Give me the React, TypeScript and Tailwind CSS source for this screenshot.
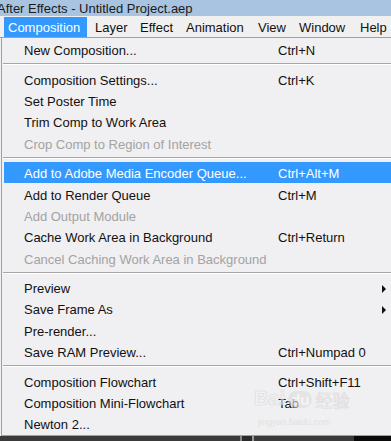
import React from "react";

type Item =
  | { type: "item"; label: string; shortcut?: string; disabled?: boolean; active?: boolean; arrow?: boolean }
  | { type: "sep" };

const items: Item[] = [
  { type: "item", label: "New Composition...", shortcut: "Ctrl+N" },
  { type: "sep" },
  { type: "item", label: "Composition Settings...", shortcut: "Ctrl+K" },
  { type: "item", label: "Set Poster Time" },
  { type: "item", label: "Trim Comp to Work Area" },
  { type: "item", label: "Crop Comp to Region of Interest", disabled: true },
  { type: "sep" },
  { type: "item", label: "Add to Adobe Media Encoder Queue...", shortcut: "Ctrl+Alt+M", active: true },
  { type: "item", label: "Add to Render Queue", shortcut: "Ctrl+M" },
  { type: "item", label: "Add Output Module", disabled: true },
  { type: "item", label: "Cache Work Area in Background", shortcut: "Ctrl+Return" },
  { type: "item", label: "Cancel Caching Work Area in Background", disabled: true },
  { type: "sep" },
  { type: "item", label: "Preview", arrow: true },
  { type: "item", label: "Save Frame As", arrow: true },
  { type: "item", label: "Pre-render..." },
  { type: "item", label: "Save RAM Preview...", shortcut: "Ctrl+Numpad 0" },
  { type: "sep" },
  { type: "item", label: "Composition Flowchart", shortcut: "Ctrl+Shift+F11" },
  { type: "item", label: "Composition Mini-Flowchart", shortcut: "Tab" },
  { type: "item", label: "Newton 2..." },
];

export default function App() {
  return (
    <div
      className="relative w-[391px] h-[441px] overflow-hidden bg-[#f0eff1] text-[13px] leading-none text-[#111]"
      style={{ fontFamily: '"Liberation Sans", Arial, sans-serif' }}
    >
      {/* Title bar */}
      <div className="h-[16px] bg-[#a8c4e1] flex items-center overflow-hidden">
        <span className="ml-[-3px] shrink-0 whitespace-nowrap text-[#1a1a1a]">After Effects - Untitled Project.aep</span>
      </div>

      {/* Menu bar */}
      <div className="h-[22px] bg-[#f0f0f0] flex items-stretch pt-[1px] pl-[4px] border-b border-[#a0a0a0] whitespace-nowrap">
        <div className="shrink-0 w-[83px] bg-[#3399ff] text-white flex items-center pl-[4px]">Composition</div>
        <div className="shrink-0 w-[8px]" />
        <div className="shrink-0 flex items-center w-[45px]">Layer</div>
        <div className="shrink-0 flex items-center w-[46px]">Effect</div>
        <div className="shrink-0 flex items-center w-[72px]">Animation</div>
        <div className="shrink-0 flex items-center w-[41px]">View</div>
        <div className="shrink-0 flex items-center w-[61px]">Window</div>
        <div className="shrink-0 flex items-center">Help</div>
      </div>

      {/* Dropdown */}
      <div className="border-l border-[#a0a0a0] ml-[1px] h-[398px] border-b pt-[1px]">
        {items.map((it, i) =>
          it.type === "sep" ? (
            <div key={i} className="h-[8px] pt-[3px] pl-[1px]">
              <div className="h-[2px] border-t border-[#a6a6a6] border-b border-b-white" />
            </div>
          ) : (
            <div
              key={i}
              className={
                "h-[21.4px] flex items-center ml-[2px] pt-[2px] " +
                (it.active ? "bg-[#3399ff] text-white " : "") +
                (it.disabled ? "text-[#a3a3a3] " : "")
              }
            >
              <span className="pl-[20px] w-[274px] shrink-0 whitespace-nowrap">{it.label}</span>
              {it.shortcut && <span className="whitespace-nowrap">{it.shortcut}</span>}
              {it.arrow && (
                <span className="ml-auto mr-[5px] w-0 h-0 border-y-[4px] border-y-transparent border-l-[4px] border-l-[#111]" />
              )}
            </div>
          )
        )}
      </div>

      {/* Bottom dark strip */}
      <div className="flex h-[5px]">
        <div className="w-[240px] bg-[#3a3a3a]" />
        <div className="w-[2px] bg-[#888]" />
        <div className="w-[10px] bg-[#2a2a2a]" />
        <div className="w-[2px] bg-[#999]" />
        <div className="w-[100px] bg-[#3a3a3a]" />
        <div className="flex-1 bg-[#0a0a0a]" />
      </div>

      {/* Watermark */}
      <div className="absolute left-[254px] top-[388px] flex items-end gap-[3px] opacity-60 pointer-events-none">
        <span className="text-[20px] font-bold text-[#f4f4f4]" style={{ WebkitTextStroke: "0.6px #cfcfcf" }}>Bai</span>
        <span className="text-[15px] font-bold text-[#f8f8f8] rounded-full bg-[#dedede] px-[3px] py-[1px]">du</span>
        <span
          className="text-[17px] text-[#f4f4f4]"
          style={{ fontFamily: '"Noto Sans CJK SC", sans-serif', WebkitTextStroke: "0.6px #cfcfcf" }}
        >
          经验
        </span>
      </div>
      <div className="absolute left-[258px] top-[418px] text-[9px] text-[#dcdcdc] opacity-70 pointer-events-none whitespace-nowrap">
        jingyan.baidu.com
      </div>
    </div>
  );
}
